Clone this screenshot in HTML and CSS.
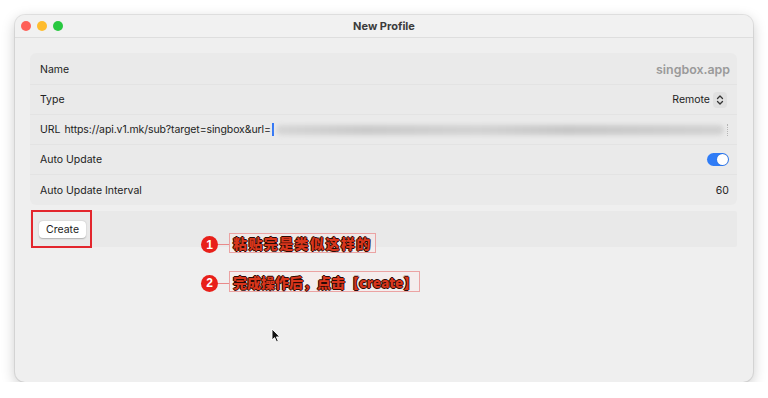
FILE: index.html
```html
<!DOCTYPE html>
<html lang="en">
<head>
    <meta charset="UTF-8">
    <meta name="viewport" content="width=device-width, initial-scale=1.0">
    <title>New Profile</title>
    <link rel="stylesheet" href="styles.css">
</head>
<body>
    <div class="window">
        <!-- Title bar -->
        <div class="titlebar">
            <div class="lights">
                <span class="light red"></span>
                <span class="light yellow"></span>
                <span class="light green"></span>
            </div>
            <div class="title">New Profile</div>
        </div>

        <div class="content">
            <div class="form-panel">
                <div class="row">
                    <span class="label">Name</span>
                    <span class="placeholder">singbox.app</span>
                </div>
                <div class="row">
                    <span class="label">Type</span>
                    <span class="picker">Remote
                        <span class="stepper">
                            <svg width="10" height="12" viewBox="0 0 10 12"><path d="M2.5 4.5 L5 2 L7.5 4.5 M2.5 7.5 L5 10 L7.5 7.5" fill="none" stroke="#333" stroke-width="1.3" stroke-linecap="round" stroke-linejoin="round"/></svg>
                        </span>
                    </span>
                </div>
                <div class="row url-row">
                    <span class="label">URL</span>
                    <span class="url-text">https://api.v1.mk/sub?target=singbox&amp;url=</span>
                    <span class="caret"></span>
                    <span class="blurred"></span>
                    <span class="grip"></span>
                </div>
                <div class="row">
                    <span class="label">Auto Update</span>
                    <span class="toggle"><span class="knob"></span></span>
                </div>
                <div class="row last">
                    <span class="label">Auto Update Interval</span>
                    <span class="value">60</span>
                </div>
            </div>

            <div class="action-bar">
                <div class="highlight">
                    <button class="create-btn">Create</button>
                </div>
            </div>
        </div>

        <!-- Tutorial notes -->
        <div class="note note-one">
            <span class="badge">1</span>
            <span class="connector"></span>
            <span class="note-text">粘贴完是类似这样的</span>
        </div>
        <div class="note note-two">
            <span class="badge">2</span>
            <span class="connector"></span>
            <span class="note-text">完成操作后，点击【create】</span>
        </div>

        <svg class="cursor" width="10" height="15" viewBox="0 0 10 15">
            <path d="M1 1 L1 12 L3.6 9.6 L5.6 14 L7.3 13.2 L5.4 8.9 L8.8 8.9 Z" fill="#111" stroke="#fff" stroke-width="0.9" stroke-linejoin="round"/>
        </svg>
    </div>
</body>
</html>
```

FILE: styles.css
```css
body {
    margin: 0;
    padding: 15px 15px 0 15px;
    background-color: #ffffff;
    font-family: Inter, "Noto Sans", Arial, sans-serif;
}

.window {
    position: relative;
    width: 738px;
    height: 367px;
    background-color: #efefef;
    border-radius: 10px;
    box-shadow: 0 4px 14px rgba(0, 0, 0, 0.22), 0 0 0 1px rgba(0, 0, 0, 0.08);
    overflow: hidden;
}

.titlebar {
    height: 22px;
    display: flex;
    align-items: center;
    position: relative;
    background-color: #f1f1f1;
    border-bottom: 1px solid #dedede;
}

.lights {
    display: flex;
    gap: 6px;
    padding-left: 6px;
}

.light {
    width: 10px;
    height: 10px;
    border-radius: 50%;
}

.light.red { background-color: #fe5f57; }
.light.yellow { background-color: #febc2e; }
.light.green { background-color: #28c840; }

.title {
    position: absolute;
    left: 0;
    right: 0;
    text-align: center;
    font-size: 11px;
    font-weight: 700;
    color: #3c3c3c;
}

.content {
    padding: 15px 16px 0 15px;
}

.form-panel {
    background-color: #eaeaea;
    border-radius: 6px;
    padding: 2px 0 0 0;
}

.row {
    height: 30px;
    display: flex;
    align-items: center;
    justify-content: space-between;
    padding: 0 8px 0 10px;
    font-size: 10.5px;
    color: #222;
    border-bottom: 1px solid #e3e3e3;
    box-sizing: border-box;
}

.row.last {
    border-bottom: none;
}

.placeholder {
    color: #9a9a9a;
    font-size: 12.4px;
    font-weight: 600;
    margin-right: -1px;
}

.picker {
    display: flex;
    align-items: center;
    gap: 3px;
    padding-right: 2px;
}

.stepper {
    display: flex;
    align-items: center;
    justify-content: center;
    width: 14px;
    height: 16px;
    background-color: #e0e0e0;
    border-radius: 4px;
}

.url-row {
    justify-content: flex-start;
}

.url-text {
    margin-left: 4px;
    letter-spacing: -0.1px;
}

.caret {
    width: 2px;
    height: 13px;
    background-color: #3478f6;
    margin-left: 1px;
}

.blurred {
    flex: 1;
    height: 10px;
    margin-left: 2px;
    margin-right: 3px;
    border-radius: 5px;
    background: linear-gradient(90deg, #d6d6d6, #cbcbcb 20%, #d3d3d3 45%, #c8c8c8 65%, #d2d2d2);
    filter: blur(2px);
}

.grip {
    width: 0;
    height: 12px;
    border-left: 1px dotted #b5b5b5;
    margin-right: 1px;
}

.toggle {
    width: 22px;
    height: 13px;
    border-radius: 7px;
    background-color: #2f7cf6;
    display: flex;
    align-items: center;
    justify-content: flex-end;
    padding: 0 1px;
    box-sizing: border-box;
}

.knob {
    width: 11px;
    height: 11px;
    border-radius: 50%;
    background-color: #ffffff;
    box-shadow: 0 0 1px rgba(0, 0, 0, 0.3);
}

.action-bar {
    margin-top: 6px;
    height: 36px;
    background-color: #e9e9e9;
    border-radius: 2px;
    display: flex;
    align-items: center;
}

.highlight {
    margin-left: 1px;
    width: 57px;
    height: 34px;
    border: 2px solid #e3262d;
    display: flex;
    align-items: center;
    justify-content: center;
}

.create-btn {
    font-family: Inter, "Noto Sans", Arial, sans-serif;
    font-size: 10.5px;
    color: #222;
    background-color: #ffffff;
    border: none;
    border-radius: 4px;
    padding: 2px 7px;
    height: 17px;
    margin-left: 2px;
    box-shadow: 0 0.5px 1.5px rgba(0, 0, 0, 0.25);
}

.note {
    position: absolute;
    display: flex;
    align-items: center;
}

.note-one {
    left: 186px;
    top: 218px;
}

.note-two {
    left: 186px;
    top: 256px;
}

.badge {
    width: 17px;
    height: 17px;
    border-radius: 50%;
    background-color: #e8201a;
    color: #fff;
    font-family: "Liberation Sans", Arial, sans-serif;
    font-weight: 700;
    font-size: 12px;
    display: flex;
    align-items: center;
    justify-content: center;
    margin-top: 3px;
}

.connector {
    width: 11px;
    height: 1px;
    margin-top: 3px;
    background-color: #e98a8a;
}

.note-text {
    border: 1px solid #eba3a3;
    background-color: rgba(255, 235, 235, 0.35);
    padding: 0 3px;
    height: 20px;
    box-sizing: border-box;
    display: flex;
    align-items: center;
    font-family: "Noto Sans CJK SC", sans-serif;
    font-weight: 900;
    font-size: 14px;
    color: #d8361c;
    text-shadow: -1px 0 #2a0a05, 1px 0 #2a0a05, 0 -1px #2a0a05, 0 1px #2a0a05;
}

.note-one .note-text {
    letter-spacing: 1.4px;
}

.note-two .note-text {
    height: 21px;
    padding-right: 2px;
}

.cursor {
    position: absolute;
    left: 256px;
    top: 313px;
}
```
